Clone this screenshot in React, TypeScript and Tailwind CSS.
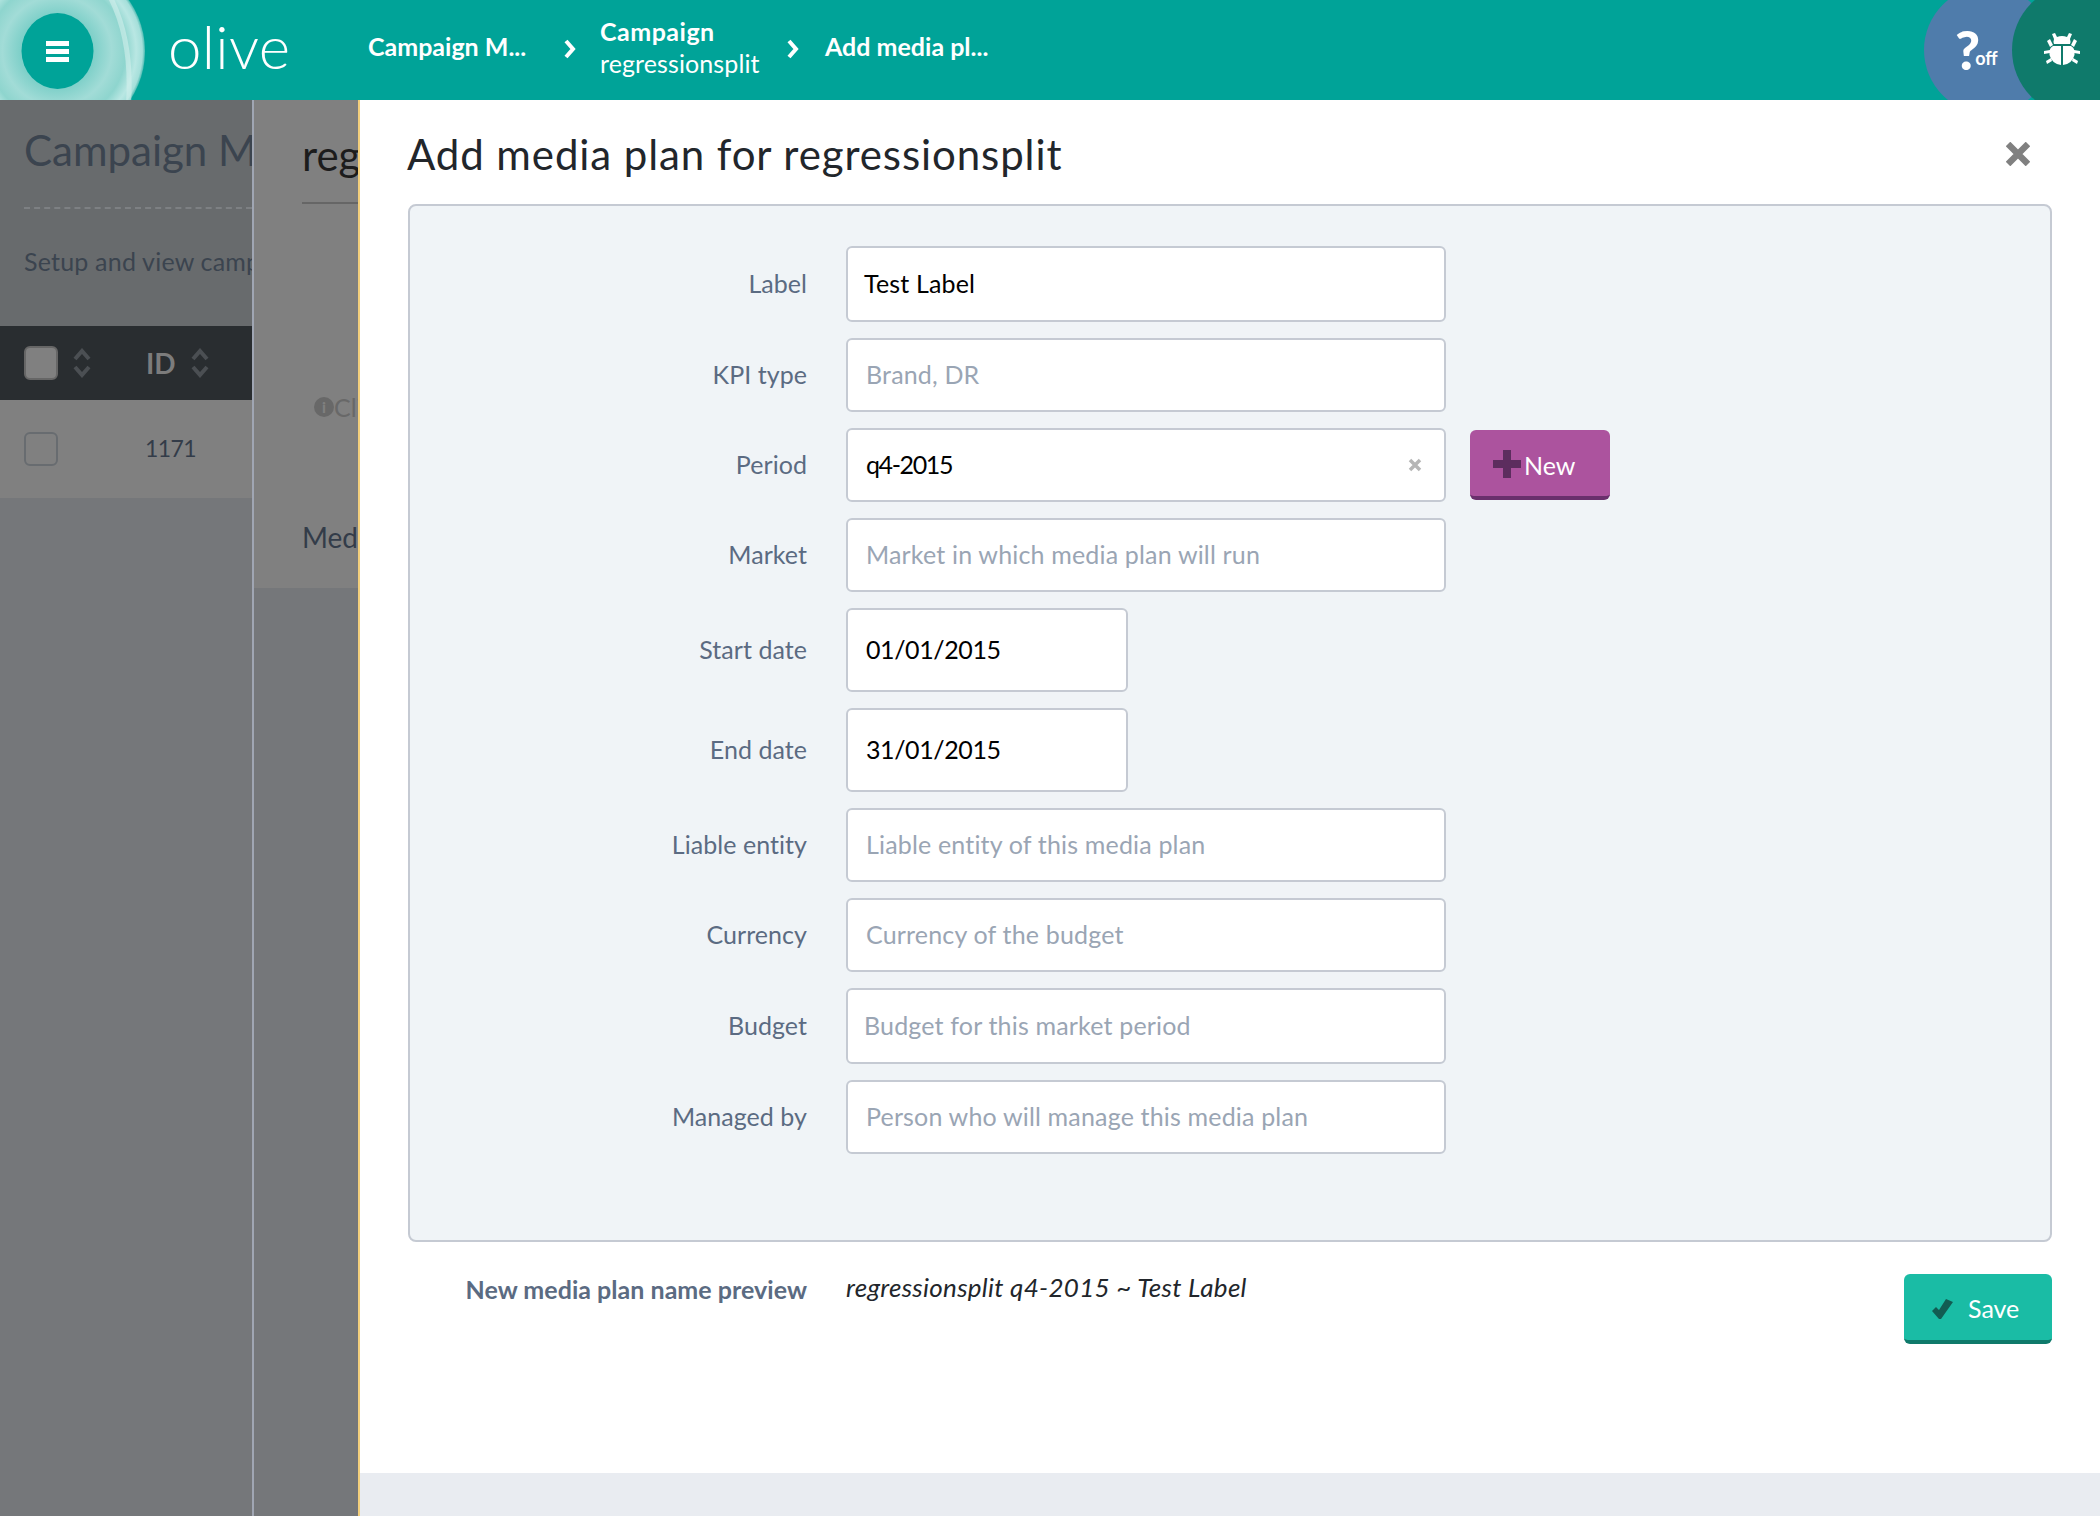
import React from "react";

const font = { fontFamily: '"Lato", "Liberation Sans", sans-serif' };

function Sort() {
  return (
    <svg width="18" height="30" viewBox="0 0 18 30" fill="none" stroke="#4b4f53" strokeWidth="4" strokeLinejoin="miter">
      <path d="M2 11 L9 3 L16 11" />
      <path d="M2 19 L9 27 L16 19" />
    </svg>
  );
}

function Chevron() {
  return (
    <svg width="12" height="20" viewBox="0 0 12 20" fill="none" stroke="#fff" strokeWidth="4" className="mb-[2px] shrink-0">
      <path d="M2 2 L9 10 L2 18" />
    </svg>
  );
}

function Logo() {
  return (
    <svg width="150" height="100" viewBox="0 0 150 100" className="shrink-0">
      <defs>
        <radialGradient id="ring" gradientUnits="userSpaceOnUse" cx="57" cy="51" r="88">
          <stop offset="0.42" stopColor="#7fd0c9" />
          <stop offset="0.62" stopColor="#a2dcd7" />
          <stop offset="0.78" stopColor="#8ed5ce" />
          <stop offset="0.9" stopColor="#b9e7e3" />
          <stop offset="0.97" stopColor="#a5dfda" />
          <stop offset="1" stopColor="#4fbcb3" />
        </radialGradient>
      </defs>
      <circle cx="57" cy="51" r="88" fill="url(#ring)" />
      <path d="M100 -20 Q135 30 128 110" fill="none" stroke="#d3f0ed" strokeWidth="5" opacity="0.6" />
      <ellipse cx="57.500" cy="51" rx="36" ry="38" fill="#00a398" />
      <rect x="46" y="41" width="23" height="5" fill="#fff" />
      <rect x="46" y="49" width="23" height="5" fill="#fff" />
      <rect x="46" y="57" width="23" height="5" fill="#fff" />
    </svg>
  );
}

function Bug() {
  return (
    <svg width="36" height="34" viewBox="0 0 36 34" fill="#fff">
      <path d="M8 1 L11 0 L13 4 Q18 2 23 4 L25 0 L28 1 L26 6 Q27 9 26 11 L10 11 Q9 9 10 6 Z" />
      <path d="M17 13 L17 32 Q8 31 5.500 22 L5.500 19 Q5.500 15 9 13 Z" />
      <path d="M19 13 L27 13 Q30.500 15 30.500 19 L30.500 22 Q28 31 19 32 Z" />
      <path d="M3 8 L6 6 L9 12 L6 14 Z" />
      <path d="M33 8 L30 6 L27 12 L30 14 Z" />
      <path d="M0 18 L6 17 L6 20 L0 21 Z" />
      <path d="M36 18 L30 17 L30 20 L36 21 Z" />
      <path d="M3 31 L2 28 L7 25 L8 28 Z" />
      <path d="M33 31 L34 28 L29 25 L28 28 Z" />
    </svg>
  );
}

function Header() {
  return (
    <header className="flex h-[100px] shrink-0 items-center overflow-hidden bg-[#00a398] text-white">
      <Logo />
      <span className="mb-[8px] ml-[18px] w-[200px] shrink-0 text-[60px] leading-none font-light tracking-[0.3px]">olive</span>
      <span className="mb-[6px] w-[196px] shrink-0 text-[25px] font-bold whitespace-nowrap">Campaign M...</span>
      <Chevron />
      <div className="mb-[6px] ml-[24px] flex w-[187px] shrink-0 flex-col text-[25px]">
        <span className="leading-[32px] font-bold tracking-[0.5px]">Campaign</span>
        <span className="leading-[32px] tracking-[0.1px]">regressionsplit</span>
      </div>
      <Chevron />
      <span className="mb-[6px] ml-[26px] text-[25px] font-bold whitespace-nowrap">Add media pl...</span>
      <div className="ml-auto flex items-center">
        <div className="-mr-[40px] flex h-[128px] w-[128px] shrink-0 items-center rounded-full bg-[#4f7cab] pl-[31px]">
          <span className="text-[54px] leading-none font-black">?</span>
          <span className="mt-[16px] -ml-[5px] text-[18px] leading-none font-bold">off</span>
        </div>
        <div className="-mr-[44px] flex h-[132px] w-[132px] shrink-0 items-center rounded-full bg-[#0f7a6b] pl-[32px]">
          <Bug />
        </div>
      </div>
    </header>
  );
}

function Backdrop() {
  return (
    <>
      <aside className="flex w-[252px] shrink-0 flex-col overflow-hidden bg-[#75777a]">
        <div className="flex h-[226px] flex-col bg-[#686b6d] pl-[24px]">
          <div className="mt-[24px] h-[85px] whitespace-nowrap border-b-2 border-dashed border-[#7d8083] text-[42px] leading-[52px] text-[#3b444f]">
            Campaign Management
          </div>
          <div className="mt-[37px] whitespace-nowrap text-[25px] leading-[30px] tracking-[0.2px] text-[#3b444f]">Setup and view campaigns</div>
        </div>
        <div className="flex h-[74px] items-center bg-[#292d30] pl-[24px]">
          <div className="h-[34px] w-[34px] rounded-[6px] border-2 border-[#666] bg-[#808080]" />
          <span className="ml-[15px]"><Sort /></span>
          <span className="ml-[55px] text-[28px] font-bold text-[#7c7c7c]">ID</span>
          <span className="ml-[15px]"><Sort /></span>
        </div>
        <div className="flex h-[98px] items-center bg-[#808080] pl-[24px]">
          <div className="h-[34px] w-[34px] rounded-[6px] border-2 border-[#686c70]" />
          <span className="mb-[2px] ml-[87px] text-[23px] tracking-[-0.6px] text-[#333c49]">1171</span>
        </div>
      </aside>
      <div className="w-[2px] shrink-0 bg-[#a0a6b3]" />
      <section className="flex w-[104px] shrink-0 flex-col overflow-hidden bg-[#75777a]">
        <div className="flex h-[488px] flex-col bg-[#808080] pl-[48px]">
          <div className="mt-[29px] h-[75px] whitespace-nowrap border-b-2 border-[#666] text-[42px] leading-[52px] text-[#1c1c1c]">
            regressionsplit
          </div>
          <div className="mt-[188px] flex items-center whitespace-nowrap pl-[12px] text-[25px] leading-[30px] text-[#686868]">
            <span className="flex h-[20px] w-[20px] shrink-0 items-center justify-center rounded-full bg-[#686868] text-[15px] font-black text-[#808080]">i</span>
            Click
          </div>
          <div className="mt-[97px] whitespace-nowrap text-[28px] leading-[36px] text-[#333c49]">Media plans</div>
        </div>
      </section>
    </>
  );
}

type Field = { label: string; value?: string; placeholder?: string; h: string; narrow?: boolean; clear?: boolean; px?: string; track?: string };

const fields: Field[] = [
  { label: "Label", value: "Test Label", h: "h-[76px]", px: "pl-[16px]", track: "tracking-[0.17px]" },
  { label: "KPI type", placeholder: "Brand, DR", h: "h-[74px]", track: "tracking-[0.17px]" },
  { label: "Period", value: "q4-2015", h: "h-[74px]", clear: true, track: "tracking-[-1.4px]" },
  { label: "Market", placeholder: "Market in which media plan will run", h: "h-[74px]", track: "tracking-[0.17px]" },
  { label: "Start date", value: "01/01/2015", h: "h-[84px]", narrow: true, track: "tracking-[-0.4px]" },
  { label: "End date", value: "31/01/2015", h: "h-[84px]", narrow: true, track: "tracking-[-0.4px]" },
  { label: "Liable entity", placeholder: "Liable entity of this media plan", h: "h-[74px]", track: "tracking-[0.17px]" },
  { label: "Currency", placeholder: "Currency of the budget", h: "h-[74px]", track: "tracking-[0.17px]" },
  { label: "Budget", placeholder: "Budget for this market period", h: "h-[76px]", px: "pl-[16px]", track: "tracking-[0.17px]" },
  { label: "Managed by", placeholder: "Person who will manage this media plan", h: "h-[74px]", track: "tracking-[0.17px]" },
];

function Row({ f }: { f: Field }) {
  return (
    <div className="flex items-center">
      <label className="w-[397px] shrink-0 text-right text-[25px] tracking-[0.05px] text-[#5b6b82]">{f.label}</label>
      <div
        className={`ml-[39px] flex shrink-0 items-center rounded-[6px] border-2 border-[#c5cad3] bg-white ${f.px ?? "pl-[18px]"} ${f.h} ${f.narrow ? "w-[282px]" : "w-[600px]"}`}
      >
        <span className={`text-[25px] ${f.track} ${f.value ? "text-black" : "text-[#9aa5b4]"}`}>{f.value ?? f.placeholder}</span>
        {f.clear && (
          <svg className="mr-[22px] ml-auto" width="14" height="14" viewBox="0 0 14 14" stroke="#b5b5b5" strokeWidth="3.5">
            <path d="M2 2 L12 12 M12 2 L2 12" />
          </svg>
        )}
      </div>
      {f.clear && (
        <button className="ml-[24px] flex h-[70px] w-[140px] items-center rounded-[6px] border-b-[4px] border-[#6a2f6c] bg-[#ac539e] pl-[23px] text-[25px] text-white">
          <svg width="28" height="28" viewBox="0 0 28 28" fill="#5c2d5e" className="mt-[2px] shrink-0">
            <path d="M10 0 H18 V10 H28 V18 H18 V28 H10 V18 H0 V10 H10 Z" />
          </svg>
          <span className="mt-[5px] ml-[3px]">New</span>
        </button>
      )}
    </div>
  );
}

function Modal() {
  return (
    <main className="flex min-w-0 flex-1 flex-col border-l-2 border-[#f3cf7c] bg-[#e9ecf1]">
      <div className="flex h-[1373px] shrink-0 flex-col bg-white px-[48px]">
        <div className="flex h-[104px] shrink-0 items-center justify-between pt-[4px]">
          <h1 className="-ml-[1px] text-[42px] leading-none tracking-[0.9px] text-[#22262b]">Add media plan for regressionsplit</h1>
          <svg className="mr-[22px]" width="24" height="24" viewBox="0 0 24 24" stroke="#808080" strokeWidth="6.5">
            <path d="M2 2 L22 22 M22 2 L2 22" />
          </svg>
        </div>
        <form className="flex h-[1038px] shrink-0 flex-col gap-[16px] rounded-[8px] border-2 border-[#c5cad3] bg-[#f0f4f7] pt-[40px]">
          {fields.map((f) => (
            <Row key={f.label} f={f} />
          ))}
        </form>
        <div className="mt-[32px] flex items-start">
          <span className="w-[399px] shrink-0 text-right text-[25px] leading-[30px] font-bold tracking-[0.03px] text-[#5b6b82]">
            New media plan name preview
          </span>
          <span className="-mt-[2px] ml-[39px] text-[26px] leading-[30px] tracking-[0.28px] text-[#22262b] italic">regressionsplit q4-2015 ~ Test Label</span>
          <button className="-mr-0 ml-auto flex h-[70px] w-[148px] items-center gap-[14px] rounded-[6px] border-b-[4px] border-[#0f7a6b] bg-[#1abca5] pl-[28px] text-[25px] text-white">
            <svg width="22" height="20" viewBox="0 0 22 20" fill="#125c52" className="mt-[4px]">
              <path d="M0 12 L4 8 L7 11 L14 0 L21 3 L9 20 L7 20 Z" />
            </svg>
            <span className="mt-[4px]">Save</span>
          </button>
        </div>
      </div>
    </main>
  );
}

export default function App() {
  return (
    <div style={font} className="flex h-[1516px] w-[2100px] flex-col overflow-hidden bg-white">
      <Header />
      <div className="flex min-h-0 flex-1">
        <Backdrop />
        <Modal />
      </div>
    </div>
  );
}
